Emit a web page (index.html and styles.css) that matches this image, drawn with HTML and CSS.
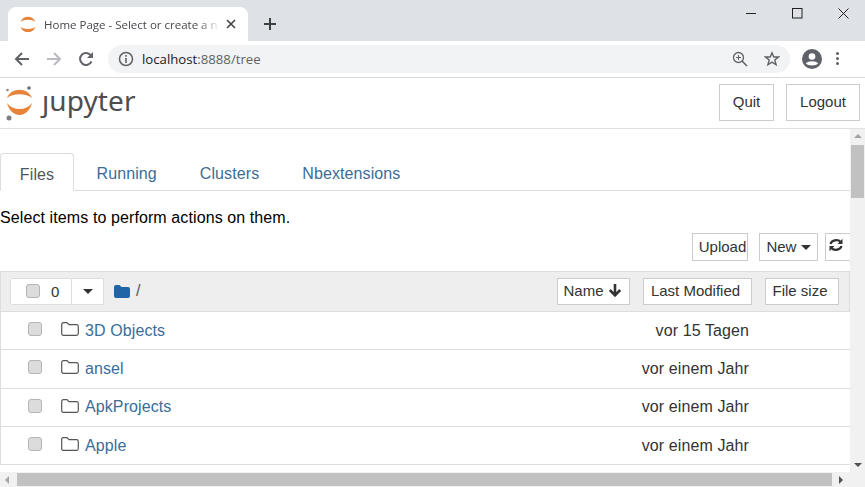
FILE: index.html
```html
<!DOCTYPE html>
<html lang="en">
<head>
  <meta charset="UTF-8">
  <title>Home Page - Select or create a notebook</title>
  <link rel="stylesheet" href="styles.css">
</head>
<body>
  <div class="tabstrip">
    <div class="browser-tab">
      <svg class="favicon" width="16" height="16" viewBox="0 0 16 16"><path d="M.5 6C3 -1 13 -1 15.500 6C12 3 4 3 .5 6Z" fill="#e8833a"/><path d="M.5 11C3 18 13 18 15.500 11C12 13.500 4 13.500 .5 11Z" fill="#e8833a"/></svg>
      <span class="tab-title">Home Page - Select or create a n</span>
      <svg class="tab-close" width="10" height="10" viewBox="0 0 10 10"><path d="M1 1L9 9M9 1L1 9" stroke="#45484c" stroke-width="1.7"/></svg>
    </div>
    <svg class="new-tab" width="12" height="12" viewBox="0 0 12 12"><path d="M6 0V12M0 6H12" stroke="#3c4043" stroke-width="2"/></svg>
    <div class="window-buttons">
      <svg width="11" height="11" viewBox="0 0 11 11"><path d="M0 5.500H10" stroke="#222" stroke-width="1"/></svg>
      <svg width="11" height="11" viewBox="0 0 11 11"><rect x=".5" y=".5" width="9.500" height="9.500" fill="none" stroke="#222"/></svg>
      <svg width="11" height="11" viewBox="0 0 11 11"><path d="M.5 .5L10.500 10.500M10.500 .5L.5 10.500" stroke="#222"/></svg>
    </div>
  </div>

  <div class="toolbar">
    <svg class="nav-icon" width="16" height="16" viewBox="0 0 16 16"><path d="M15 8H2M8 2L2 8L8 14" fill="none" stroke="#5f6368" stroke-width="2"/></svg>
    <svg class="nav-icon" width="16" height="16" viewBox="0 0 16 16"><path d="M1 8H14M8 2L14 8L8 14" fill="none" stroke="#b9bbbe" stroke-width="2"/></svg>
    <svg class="nav-icon" width="16" height="16" viewBox="0 0 16 16"><path d="M13.500 10.500A6 6 0 1 1 13 4.500" fill="none" stroke="#5f6368" stroke-width="2"/><path d="M15 1V7H9Z" fill="#5f6368"/></svg>
    <div class="omnibox">
      <svg width="16" height="16" viewBox="0 0 16 16"><circle cx="8" cy="8" r="6.500" fill="none" stroke="#5f6368" stroke-width="1.500"/><path d="M8 7V12M8 4V5.800" stroke="#5f6368" stroke-width="1.600"/></svg>
      <span class="url">localhost<span class="url-rest">:8888/tree</span></span>
      <svg class="omni-zoom" width="16" height="16" viewBox="0 0 16 16"><circle cx="6.500" cy="6.500" r="5" fill="none" stroke="#5f6368" stroke-width="1.300"/><path d="M10 10L15 15" stroke="#5f6368" stroke-width="1.600"/><path d="M4 6.500H9M6.500 4V9" stroke="#5f6368"/></svg>
      <svg class="omni-star" width="16" height="16" viewBox="0 0 16 16"><path d="M8 1.800L9.800 6H14.500L10.800 9L12.100 13.800L8 11.200L3.900 13.800L5.200 9L1.500 6H6.200Z" fill="none" stroke="#5f6368" stroke-width="1.400"/></svg>
    </div>
    <svg class="avatar" width="20" height="20" viewBox="0 0 20 20"><circle cx="10" cy="10" r="10" fill="#5f6368"/><circle cx="10" cy="7.500" r="3.300" fill="#fff"/><path d="M3.800 14.500C6 11.500 14 11.500 16.200 14.500C14 17 6 17 3.800 14.500Z" fill="#fff"/></svg>
    <div class="kebab"><i></i><i></i><i></i></div>
  </div>

  <header class="site-header">
    <svg class="logo" width="30" height="36" viewBox="0 0 30 36"><path d="M2 12C6 1 23 1 27 12C21 7 8 7 2 12Z" fill="#e8833a"/><path d="M2 17C6 33 23 33 27 17C21 25 8 25 2 17Z" fill="#e8833a"/><circle cx="24" cy="2" r="1.800" fill="#6d6e71"/><circle cx="2.500" cy="4" r="1.300" fill="#8a8b8d"/><circle cx="4" cy="32" r="2.500" fill="#7d7e80"/></svg>
    <span class="wordmark">&#567;upyter</span>
    <button class="btn btn-quit">Quit</button>
    <button class="btn btn-logout">Logout</button>
  </header>

  <div class="viewport">
    <main class="content">
      <ul class="tabs">
        <li class="tab active">Files</li>
        <li class="tab">Running</li>
        <li class="tab">Clusters</li>
        <li class="tab">Nbextensions</li>
      </ul>
      <p class="hint">Select items to perform actions on them.</p>
      <div class="actions">
        <button class="btn btn-small btn-upload">Upload</button>
        <button class="btn btn-small btn-new">New <i class="caret"></i></button>
        <button class="btn btn-small btn-refresh">
          <svg width="14" height="14" viewBox="0 0 14 14"><path d="M1.500 6C2.500 2 9 .8 11.500 4M12.500 8C11.500 12 5 13.200 2.500 10" fill="none" stroke="#333" stroke-width="2.200"/><path d="M13.500 .8V6H8.500ZM.5 13.200V8H5.500Z" fill="#333"/></svg>
        </button>
      </div>

      <section class="list">
        <div class="list-head">
          <div class="select-group">
            <span class="select-all"><i class="check"></i><span>0</span></span>
            <span class="select-menu"><i class="caret"></i></span>
          </div>
          <svg class="root-folder" width="16" height="13" viewBox="0 0 16 13"><path d="M0 2Q0 0 2 0H5.500L7.500 2H14Q16 2 16 4V11Q16 13 14 13H2Q0 13 0 11Z" fill="#1f66a8"/></svg>
          <span class="crumb">/</span>
          <button class="btn btn-sort btn-name">Name <svg width="14" height="14" viewBox="0 0 14 14"><path d="M7 1V12M1.800 7L7 12.300L12.200 7" fill="none" stroke="#333" stroke-width="2.600"/></svg></button>
          <button class="btn btn-sort btn-modified">Last Modified</button>
          <button class="btn btn-sort btn-size">File size</button>
        </div>
        <div class="row">
          <i class="check"></i>
          <svg class="folder" width="18" height="14" viewBox="0 0 18 14"><path d="M.7 2.500Q.7 .7 2.500 .7H6L8 2.700H15.500Q17.300 2.700 17.300 4.500V11.500Q17.300 13.300 15.500 13.300H2.500Q.7 13.300 .7 11.500Z" fill="none" stroke="#555" stroke-width="1.200"/></svg>
          <a class="name">3D Objects</a>
          <span class="date">vor 15 Tagen</span>
        </div>
        <div class="row">
          <i class="check"></i>
          <svg class="folder" width="18" height="14" viewBox="0 0 18 14"><path d="M.7 2.500Q.7 .7 2.500 .7H6L8 2.700H15.500Q17.300 2.700 17.300 4.500V11.500Q17.300 13.300 15.500 13.300H2.500Q.7 13.300 .7 11.500Z" fill="none" stroke="#555" stroke-width="1.200"/></svg>
          <a class="name">ansel</a>
          <span class="date">vor einem Jahr</span>
        </div>
        <div class="row">
          <i class="check"></i>
          <svg class="folder" width="18" height="14" viewBox="0 0 18 14"><path d="M.7 2.500Q.7 .7 2.500 .7H6L8 2.700H15.500Q17.300 2.700 17.300 4.500V11.500Q17.300 13.300 15.500 13.300H2.500Q.7 13.300 .7 11.500Z" fill="none" stroke="#555" stroke-width="1.200"/></svg>
          <a class="name">ApkProjects</a>
          <span class="date">vor einem Jahr</span>
        </div>
        <div class="row">
          <i class="check"></i>
          <svg class="folder" width="18" height="14" viewBox="0 0 18 14"><path d="M.7 2.500Q.7 .7 2.500 .7H6L8 2.700H15.500Q17.300 2.700 17.300 4.500V11.500Q17.300 13.300 15.500 13.300H2.500Q.7 13.300 .7 11.500Z" fill="none" stroke="#555" stroke-width="1.200"/></svg>
          <a class="name">Apple</a>
          <span class="date">vor einem Jahr</span>
        </div>
      </section>
    </main>
    <div class="vscroll">
      <i class="arrow arrow-up"></i>
      <div class="vthumb"></div>
      <i class="arrow arrow-down"></i>
    </div>
  </div>

  <div class="hscroll">
    <i class="arrow arrow-left"></i>
    <div class="hthumb"></div>
    <i class="arrow arrow-right"></i>
  </div>
</body>
</html>
```

FILE: styles.css
```css
* {
  box-sizing: border-box;
}
html, body {
  height: 100%;
}
body {
  margin: 0;
  display: flex;
  flex-direction: column;
  overflow: hidden;
  font-family: "Liberation Sans", Arial, sans-serif;
  font-size: 16px;
  color: #333;
  background: #fff;
}

/* browser chrome */
.tabstrip {
  height: 41px;
  flex: none;
  display: flex;
  align-items: flex-end;
  padding-left: 8px;
  background: #dee1e6;
}
.browser-tab {
  width: 240px;
  height: 34px;
  display: flex;
  align-items: center;
  padding: 0 10px 0 12px;
  background: #fff;
  border-radius: 8px 8px 0 0;
}
.favicon {
  flex: none;
}
.tab-title {
  width: 176px;
  margin-left: 8px;
  white-space: nowrap;
  font-family: "Open Sans", sans-serif;
  font-size: 11.500px;
  color: #45484c;
  -webkit-mask-image: linear-gradient(to right, #000 88%, transparent);
  mask-image: linear-gradient(to right, #000 88%, transparent);
}
.tab-close {
  margin-left: 6px;
  flex: none;
}
.new-tab {
  align-self: center;
  margin: 7px 0 0 16px;
}
.window-buttons {
  align-self: flex-start;
  margin: 8px 16px 0 auto;
  display: flex;
  gap: 35px;
}
.toolbar {
  height: 37px;
  flex: none;
  display: flex;
  align-items: center;
  padding: 0 0 1px 14px;
  background: #fff;
  border-bottom: 1px solid #d9d9d9;
}
.nav-icon {
  margin-right: 16px;
}
.omnibox {
  width: 682px;
  height: 28px;
  margin-left: -2px;
  display: flex;
  align-items: center;
  padding: 0 10px;
  background: #f1f3f4;
  border-radius: 14px;
}
.url {
  margin-left: 8px;
  font-family: "Open Sans", sans-serif;
  font-size: 13.200px;
  color: #202124;
}
.url-rest {
  color: #5f6368;
}
.omni-zoom {
  margin-left: auto;
}
.omni-star {
  margin-left: 16px;
}
.avatar {
  margin-left: 12px;
}
.kebab {
  margin-left: 14px;
  display: flex;
  flex-direction: column;
  gap: 2px;
}
.kebab i {
  width: 3px;
  height: 3px;
  border-radius: 50%;
  background: #5f6368;
}

/* jupyter header */
.site-header {
  height: 51px;
  flex: none;
  display: flex;
  align-items: flex-start;
  padding: 6px 5px 0 5px;
  border-bottom: 1px solid #e0e0e0;
}
.logo {
  flex: none;
  margin-top: 2px;
}
.wordmark {
  margin: -4px 0 0 7px;
  font-family: "Noto Sans", sans-serif;
  font-size: 28px;
  line-height: 40px;
  letter-spacing: .1px;
  color: #4e4e4e;
}
.btn {
  font: inherit;
  font-size: 15px;
  color: #333;
  background: #fff;
  border: 1px solid #ccc;
  padding: 0 0 2px;
}
.btn-quit {
  width: 55px;
  height: 37px;
  margin-left: auto;
}
.btn-logout {
  width: 74px;
  height: 37px;
  margin-left: 12px;
}

/* notebook list */
.viewport {
  flex: 1;
  min-height: 0;
  display: flex;
}
.content {
  width: 850px;
  flex: none;
  overflow: hidden;
  padding-top: 24px;
}
.tabs {
  height: 38px;
  margin: 0;
  padding: 0;
  display: flex;
  list-style: none;
  border-bottom: 1px solid #ddd;
}
.tab {
  height: 37px;
  padding: 0 21.500px;
  line-height: 42px;
  letter-spacing: .1px;
  color: #3a6d98;
}
.tab.active {
  width: 74px;
  height: 38px;
  padding: 0;
  margin-right: 1px;
  text-align: center;
  color: #555;
  background: #fff;
  border: 1px solid #ddd;
  border-bottom-color: #fff;
  border-radius: 4px 4px 0 0;
}
.hint {
  margin: 18px 0 6px;
  line-height: 18px;
  letter-spacing: .1px;
  color: #000;
}
.actions {
  height: 28px;
  display: flex;
  justify-content: flex-end;
  gap: 7px;
  margin-right: -10px;
}
.btn-small {
  height: 28px;
}
.btn-upload {
  width: 56px;
  margin-right: 4px;
  padding-left: 5px;
}
.btn-new {
  width: 59px;
}
.btn-refresh {
  width: 35px;
  padding-right: 14px;
  text-align: center;
}
.caret {
  display: inline-block;
  width: 0;
  height: 0;
  vertical-align: middle;
  border-top: 5px solid #333;
  border-left: 5px solid transparent;
  border-right: 5px solid transparent;
}
.list {
  margin-top: 10px;
  border-left: 1px solid #ddd;
}
.list-head {
  height: 41px;
  display: flex;
  align-items: center;
  padding: 0 10px 1px 9px;
  background: #eee;
  border: 1px solid #ddd;
  border-left: 0;
}
.select-group {
  display: flex;
  height: 27px;
  background: #fff;
}
.select-all {
  width: 62px;
  display: flex;
  align-items: center;
  gap: 11px;
  padding-left: 15px;
  font-size: 15px;
  border: 1px solid #ddd;
  border-radius: 2px 0 0 2px;
}
.select-menu {
  width: 32px;
  display: flex;
  align-items: center;
  justify-content: center;
  border: 1px solid #ddd;
  border-left: 0;
}
.check {
  width: 14px;
  height: 14px;
  flex: none;
  background: #dcdcdc;
  border: 1px solid #b5b5b5;
  border-radius: 3px;
}
.root-folder {
  margin-left: 10px;
}
.crumb {
  margin-left: 6px;
  color: #555;
}
.btn-sort {
  height: 27px;
  border-color: #ccc;
}
.btn-name {
  width: 73px;
  margin-left: auto;
  display: flex;
  align-items: center;
  justify-content: center;
  gap: 4px;
  padding-right: 2px;
}
.btn-modified {
  width: 109px;
  margin-left: 13px;
  padding-right: 4px;
}
.btn-size {
  width: 74px;
  margin-left: 13px;
  padding-right: 4px;
}
.row {
  height: 38.300px;
  display: flex;
  align-items: center;
  padding: 0 101px 0 27px;
  letter-spacing: .1px;
  border-bottom: 1px solid #ddd;
}
.row .check {
  margin-top: -3px;
}
.folder {
  margin: -3px 0 0 19px;
}
.name {
  margin-left: 6px;
  color: #3a6d98;
}
.date {
  margin-left: auto;
  color: #333;
}

/* scrollbars */
.vscroll {
  width: 15px;
  flex: none;
  display: flex;
  flex-direction: column;
  align-items: center;
  background: #f1f1f1;
  padding-top: 5px;
  padding-bottom: 5px;
}
.vthumb {
  width: 13px;
  height: 53px;
  margin-top: 7px;
  background: #c1c1c1;
}
.hscroll {
  height: 15px;
  flex: none;
  display: flex;
  align-items: center;
  padding: 0 20px 0 5px;
  background: #f1f1f1;
}
.hthumb {
  width: 815px;
  height: 13px;
  margin-left: 8px;
  background: #c1c1c1;
}
.arrow {
  width: 0;
  height: 0;
  flex: none;
  border: 4px solid transparent;
}
.arrow-up {
  border-top: 0;
  border-bottom-color: #a3a3a3;
}
.arrow-down {
  margin-top: auto;
  border-bottom: 0;
  border-top-color: #505050;
}
.arrow-left {
  border-left: 0;
  border-right-color: #a3a3a3;
}
.arrow-right {
  margin-left: 7px;
  border-right: 0;
  border-left-color: #505050;
}
```
